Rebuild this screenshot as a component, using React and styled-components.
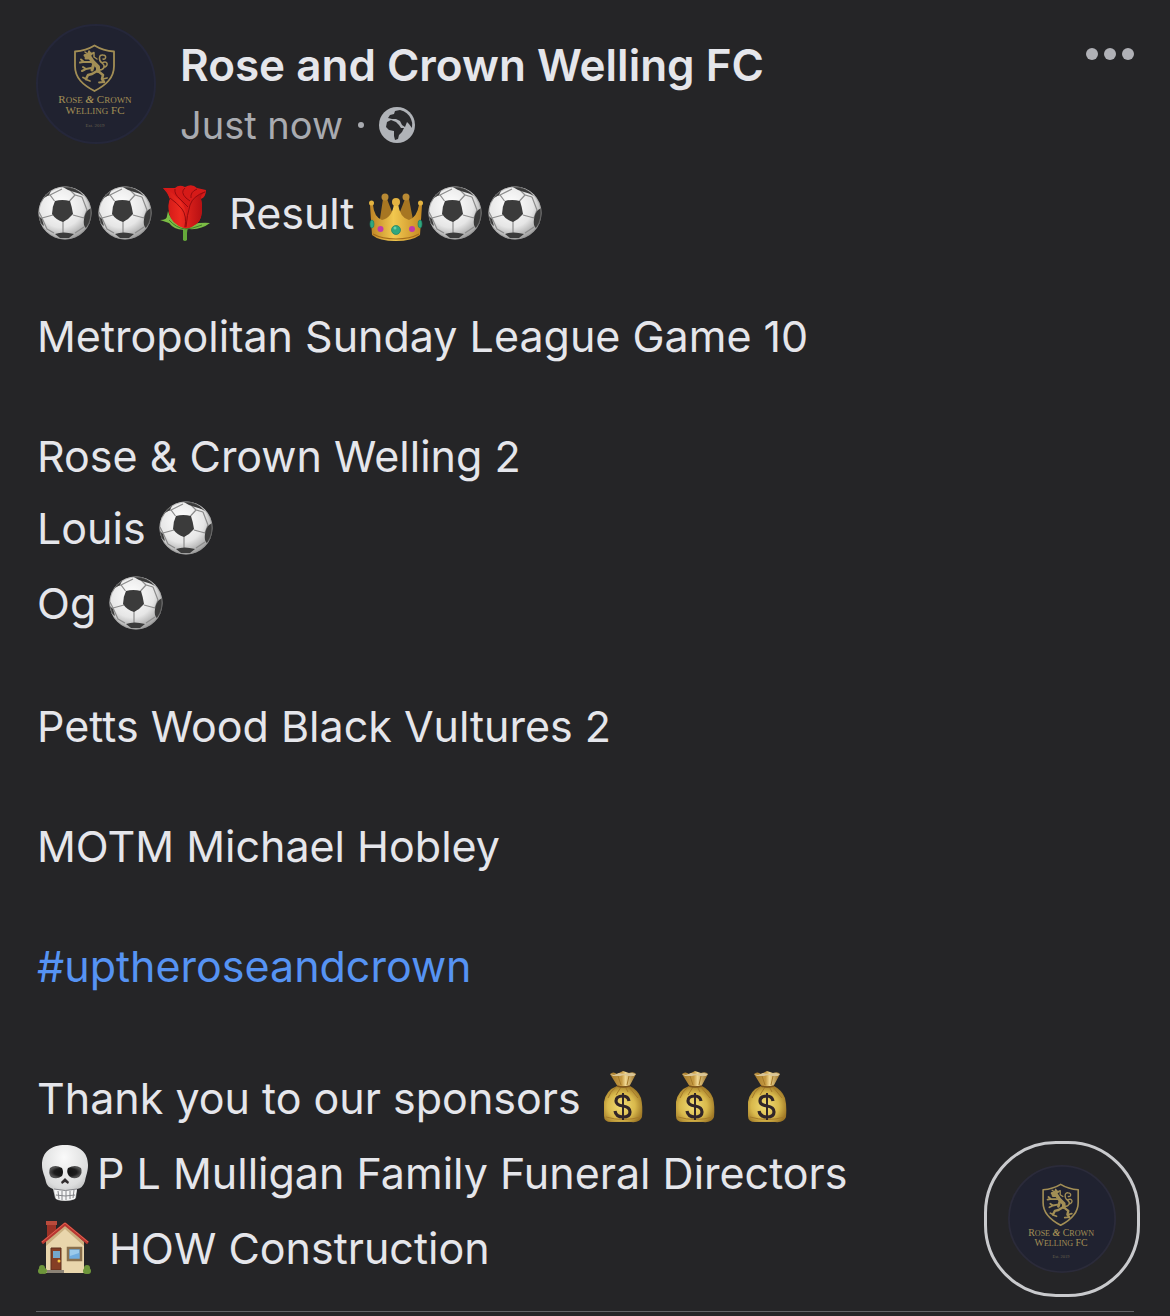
import React from "react";
import styled, { createGlobalStyle } from "styled-components";

const GlobalStyle = createGlobalStyle`
  * { box-sizing: border-box; }
  body {
    margin: 0;
    background: #252527;
    color: #e5e6eb;
    font-family: Inter, "Liberation Sans", sans-serif;
  }
`;

const Post = styled.article`
  position: relative;
  min-height: 100vh;
  padding: 24px 36px 4px;
`;

const Header = styled.header`
  display: flex;
  gap: 24px;
  height: 120px;
`;

const Avatar = styled.a`
  display: block;
  flex: none;
  width: 120px;
  height: 120px;
`;

const Heading = styled.div`
  flex: 1;
  padding-top: 11px;
`;

const PageName = styled.h1`
  margin: 0;
  font-size: 44px;
  font-weight: 600;
  line-height: 60px;
`;

const Meta = styled.div`
  display: flex;
  align-items: center;
  gap: 15px;
  height: 60px;
  color: #a9abb0;
  font-size: 38px;
  line-height: 60px;
`;

const Dot = styled.span`
  width: 6px;
  height: 6px;
  border-radius: 50%;
  background: currentColor;
`;

const MenuButton = styled.button`
  display: flex;
  align-items: center;
  gap: 6px;
  align-self: flex-start;
  height: 24px;
  margin-top: 18px;
  padding: 0;
  border: 0;
  background: none;
  color: #b0b1b6;
  cursor: pointer;

  span {
    width: 12px;
    height: 12px;
    border-radius: 50%;
    background: currentColor;
  }
`;

const Message = styled.div`
  padding: 27px 0 30px;
  border-bottom: 1px solid #626366;
  font-size: 43px;
`;

const Line = styled.p`
  display: flex;
  align-items: center;
  height: ${(p) => (p.$emoji ? 75 : 60)}px;
  margin: 0;
  padding: ${(p) => (p.$emoji ? 8 : 0)}px 0 0 1px;
  line-height: 60px;
  white-space: pre;
`;

const Blank = styled.div`
  height: 60px;
`;

const Hashtag = styled.a`
  color: #5693f3;
  text-decoration: none;
`;

const EmojiSvg = styled.svg`
  flex: none;
  width: 60px;
  height: 60px;
`;

const Badge = styled.button`
  position: absolute;
  right: 30px;
  bottom: 19px;
  display: grid;
  place-items: center;
  width: 156px;
  height: 156px;
  padding: 0;
  border: 3px solid #c9cacd;
  border-radius: 72px;
  background: #252527;
  cursor: pointer;
`;

const Logo = styled.svg`
  display: block;
  width: ${(p) => p.$size}px;
  height: ${(p) => p.$size}px;
  font-family: "Liberation Serif", serif;
`;

const Globe = styled.svg`
  width: 36px;
  height: 36px;
`;

function ClubLogo({ size, rim = "#25273a" }) {
  return (
    <Logo $size={size} viewBox="0 0 120 120" role="img" aria-label="Club crest">
      <circle cx="60" cy="60" r="59" fill="#202230" stroke={rim} strokeWidth="2" />
      <g fill="none" stroke="#a28e55" strokeLinecap="round" strokeLinejoin="round">
        <path strokeWidth="1.8" d="M58.500 21.500C52 25.500 46 27 39 27.500V42C39 54 47 61 58.500 67C70 61 78 54 78 42V27.500C71 27 65 25.500 58.500 21.500Z" />
        <path strokeWidth="4" d="M53 32L57 38L62 43L62 47" />
        <path strokeWidth="3" d="M49 31.500L55 30M50 34L53 34M58 39L56 46" />
        <path strokeWidth="2" d="M55 38L48 38L45 35.500M44 38.500L47 38M55 44L50 45L47 43M46 47L49 45.500" />
        <path strokeWidth="2.600" d="M61 47L56 50L52 51L50 55M62 47L67 51L66 55L68 58" />
        <path strokeWidth="1.800" d="M50 55L47 53.500M50 55.500L54 57M68 58L63 58.500M67 55L71 54" />
        <path strokeWidth="1.500" d="M63 46C68 46 70 42 66 39C62 36 63 30 67 31C71 31 70 36 67 35M66 39C71 36 73 41 69 43" />
        <path strokeWidth="1.500" d="M49 28L52 30L53 27L55 30L58 28.500L58 33L61 35" />
      </g>
      <g fill="#a28e55" textAnchor="middle">
        <text x="59" y="79" fontSize="11">
          R<tspan fontSize="9">OSE</tspan> <tspan fontStyle="italic" fontWeight="700">&amp;</tspan> C<tspan fontSize="9">ROWN</tspan>
        </text>
        <text x="59" y="90" fontSize="11">
          W<tspan fontSize="9">ELLING</tspan> FC
        </text>
        <text x="59" y="103" fontSize="5" fill="#66604f">Est. 2019</text>
      </g>
    </Logo>
  );
}

function Ball() {
  return (
    <EmojiSvg viewBox="0 0 60 60" role="img" aria-label="Football">
      <defs>
        <radialGradient id="ball" cx="42%" cy="35%" r="65%">
          <stop offset="0" stopColor="#ffffff" />
          <stop offset=".65" stopColor="#e6e6e6" />
          <stop offset="1" stopColor="#a2a2a2" />
        </radialGradient>
        <clipPath id="ballEdge"><circle cx="28" cy="30" r="26.500" /></clipPath>
      </defs>
      <circle cx="28" cy="30" r="26.500" fill="url(#ball)" />
      <g clipPath="url(#ballEdge)">
        <path fill="none" stroke="#8c8c8c" strokeWidth="1.200" d="M17.500 18L13 12L8 13M32.500 18L38 12L45 14M13 12L25 6M38 12L33 7M36 32L47 35M26 38V51M16 32L5 35M5 35L2 29M5 35L10 46L17 50M47 35L50 27L45 14M38 50L47 44" />
        <g fill="#3b3b3b">
          <path d="M18 18Q25 16 33 18Q35 24 36 31Q32 36 26 39Q19 37 15 31Q15 24 18 18Z" />
          <path d="M24 3Q38 2 47 13Q42 10 37 9L31 7ZM9 9L15 6L12 12L7 15L3 21Z" />
          <path d="M56 24V36L49 45Q46 43 47 36Q48 30 51 27ZM18 51Q26 48 37 51L32 55H23ZM1 32L5 36L7 43L3 40Z" />
        </g>
      </g>
      <circle cx="28" cy="30" r="26" fill="none" stroke="#8f8f8f" strokeOpacity=".5" />
    </EmojiSvg>
  );
}

function Rose() {
  return (
    <EmojiSvg viewBox="0 0 60 60" role="img" aria-label="Rose">
      <defs>
        <linearGradient id="petal" x1="0" x2="1">
          <stop offset="0" stopColor="#c91515" />
          <stop offset=".4" stopColor="#ed2a20" />
          <stop offset="1" stopColor="#ad0b10" />
        </linearGradient>
      </defs>
      <path fill="#65a83a" d="M26 43H31L30 50V57Q28 59 26 57V50Z" />
      <path fill="#7bbd45" d="M11 28Q12 37 28 45Q36 39 53 40Q44 47 32 46Q19 49 12 40L3 37Q10 37 10 33Z" />
      <path fill="#d61a18" d="M6 5L18 5Q22 1 28 4Q35 0 40 5L49 7Q49 14 44 16Q46 25 44 34Q42 42 29 46Q16 41 13 32Q10 22 13 16Q11 10 6 5Z" />
      <path fill="url(#petal)" d="M6 5Q13 7 19 14Q29 21 29 32Q28 42 27 45Q14 41 12 30Q11 21 13 16Q11 9 6 5ZM49 8Q43 12 44 16Q46 24 44 34Q42 42 29 46Q31 31 33 20Q37 12 49 8Z" />
      <path fill="none" stroke="#960a0e" strokeWidth="1" d="M13 15Q20 20 25 26Q30 33 28 44M18 6Q17 11 23 16Q27 20 31 24M28 5Q23 9 29 15L33 18M40 6Q33 9 34 15M48 9Q36 13 33 22Q30 32 29 44" />
      <path fill="none" stroke="#447c28" d="M12 37Q19 45 28 46Q35 46 45 42" />
    </EmojiSvg>
  );
}

function Crown() {
  return (
    <EmojiSvg viewBox="0 0 60 60" role="img" aria-label="Crown">
      <defs>
        <linearGradient id="gold" x1="0" x2="1">
          <stop offset="0" stopColor="#bd8325" />
          <stop offset=".45" stopColor="#f2c84f" />
          <stop offset="1" stopColor="#c58a24" />
        </linearGradient>
      </defs>
      <g transform="translate(1 -1)">
        <path fill="#a77622" d="M15 17H19L28 40L37 17H41L46 43H11Z" />
        <g fill="#b98a34"><circle cx="17" cy="15" r="3.500" /><circle cx="38" cy="15" r="3.500" /></g>
        <path fill="url(#gold)" d="M2 23H5Q6 35 14 38Q24 36 26 22H30Q32 36 41 38Q49 35 51 23H54L52 53Q44 59 28 59Q11 59 4 53Z" />
        <g fill="#e3b341"><circle cx="3.500" cy="21" r="2.500" /><circle cx="28" cy="20" r="4" /><circle cx="52.500" cy="21" r="2.500" /></g>
        <path fill="none" stroke="#a56d1b" strokeWidth="1.200" d="M5 52Q14 57 28 57Q42 57 51 52" />
        <g fill="#c23ba6"><circle cx="12.500" cy="47" r="3" /><circle cx="44" cy="47" r="3" /></g>
        <g fill="#30a77e" stroke="#208063" strokeWidth=".7"><circle cx="28" cy="48" r="4.500" /><ellipse cx="4" cy="42" rx="2" ry="4" /><ellipse cx="52" cy="42" rx="2" ry="4" /></g>
        <circle cx="27" cy="46" r="1.500" fill="#68d1ab" />
      </g>
    </EmojiSvg>
  );
}

function MoneyBag() {
  return (
    <EmojiSvg viewBox="0 0 60 60" role="img" aria-label="Money bag">
      <defs>
        <radialGradient id="bag" cx="45%" cy="55%" r="60%">
          <stop offset="0" stopColor="#f1dc75" />
          <stop offset=".6" stopColor="#d9b94c" />
          <stop offset="1" stopColor="#9b7424" />
        </radialGradient>
        <linearGradient id="neck" x1="0" x2="1">
          <stop offset="0" stopColor="#a57b2c" />
          <stop offset=".45" stopColor="#c69a42" />
          <stop offset=".6" stopColor="#f0d791" />
          <stop offset="1" stopColor="#956c25" />
        </linearGradient>
      </defs>
      <path fill="url(#neck)" d="M17 6Q20 3 24 6L30 3L36 5Q41 3 43 6L36 19H25Z" />
      <path fill="#d9c596" d="M17 6L21 7L26 5L31 6L39 5L43 6L41 8L35 8L31 7L27 8L20 8Z" />
      <path fill="url(#bag)" d="M24 18H37Q45 22 48 30Q50 38 49 49Q47 55 38 54H18Q11 54 11 48V34Q13 22 24 18Z" />
      <path fill="none" stroke="#a67b2a" strokeWidth="1" d="M23 19Q17 24 15 30M28 19L23 27M32 18L35 24M36 19L45 30M13 49Q30 54 48 49M25 8L28 17M36 8L34 17" />
      <path fill="none" stroke="#7c541c" strokeWidth="1.500" d="M24 18Q30 20 37 18" />
      <path fill="none" stroke="#302529" strokeWidth="3.200" d="M36 33Q35 28 30 28Q23 28 23 33Q23 37 30 38Q37 39 37 44Q37 49 30 49Q23 49 22 43" />
      <path stroke="#302529" strokeWidth="2" d="M30 25V52" />
    </EmojiSvg>
  );
}

function Skull() {
  return (
    <EmojiSvg viewBox="0 0 60 60" role="img" aria-label="Skull">
      <defs>
        <radialGradient id="bone" cx="48%" cy="22%" r="76%">
          <stop offset="0" stopColor="#fafafa" />
          <stop offset=".7" stopColor="#dcdddd" />
          <stop offset="1" stopColor="#adaeaf" />
        </radialGradient>
        <radialGradient id="socket">
          <stop offset="0" stopColor="#101010" />
          <stop offset=".7" stopColor="#1d1d1d" />
          <stop offset="1" stopColor="#505050" />
        </radialGradient>
      </defs>
      <path fill="url(#bone)" d="M28 2C42 2 51 9 51 22C51 29 49 32 48 38Q46 45 40 46L39 55Q36 58 28 58Q20 58 18 55L16 46Q10 44 9 39C8 33 5 29 5 22C5 9 14 2 28 2Z" />
      <path fill="url(#socket)" d="M13 25Q18 21 25 25Q27 29 25 33Q20 37 14 34Q11 30 13 25ZM31 25Q38 21 44 25Q46 30 42 34Q36 37 32 33Q29 29 31 25Z" />
      <path fill="#302c2d" d="M28 35L32 39L31 41L28 39L25 41L24 39Z" />
      <path fill="#f5f5f5" d="M17 46Q28 49 40 46L38 56Q28 59 19 56Z" />
      <path fill="none" stroke="#85868a" strokeWidth="1" d="M17 46Q28 49 40 46M21 48L22 56M25 48V57M29 48V57M33 48V56M37 47L36 55M19 52Q28 54 38 52" />
    </EmojiSvg>
  );
}

function House() {
  return (
    <EmojiSvg viewBox="0 0 60 60" role="img" aria-label="House">
      <path fill="#9b3226" d="M10 4H19V21H10Z" /><path fill="#b94b3c" d="M9 3H20V7H9Z" />
      <path fill="#e9d6ac" d="M9 21L28 7L47 24V55H9Z" />
      <path fill="#c9ae7e" d="M9 21L28 6L47 24V28L28 11L9 28Z" />
      <path fill="none" stroke="#b83630" strokeWidth="3" strokeLinejoin="round" d="M5 25L28 6L51 25" />
      <path fill="none" stroke="#de6250" strokeWidth="1" d="M5 24L28 5L51 24" />
      <path fill="#853f25" stroke="#5d301f" d="M14 30H24V52H14Z" /><path fill="#74a8ce" d="M16 33H23V40H16Z" />
      <circle cx="22" cy="43" r="1.500" fill="#f6c844" />
      <path fill="#70ade0" stroke="#8a704d" strokeWidth="2.500" d="M31 30H44V42H31Z" />
      <path fill="#9bcaec" d="M33 32H42V35L33 38Z" />
      <path fill="#8c8376" d="M10 52H27V55H10Z" />
      <g fill="#6e963b"><circle cx="5" cy="50" r="3" /><circle cx="4" cy="53" r="3" /><circle cx="7" cy="53" r="3" /><circle cx="50" cy="50" r="3" /><circle cx="49" cy="53" r="3" /><circle cx="51" cy="53" r="3" /></g>
    </EmojiSvg>
  );
}

function PublicGlobe() {
  return (
    <Globe viewBox="0 0 36 36" role="img" aria-label="Public">
      <circle cx="18" cy="18" r="18" fill="#b0b3b8" />
      <path fill="#29292c" d="M9 11L11 8L15 7L16 4L21 3Q29 5 32 12Q34 16 33 21L30 17L28 15L26 20L23 18L21 14L17 12L13 12Z" />
      <path fill="#29292c" d="M8 15L12 13L17 15L20 18L22 21L25 21L23 25L20 28L19 32L16 33L15 29V24L10 23L7 20Z" />
    </Globe>
  );
}

export default function App() {
  return (
    <>
      <GlobalStyle />
      <Post>
        <Header>
          <Avatar href="#page" aria-label="Rose and Crown Welling FC"><ClubLogo size={120} /></Avatar>
          <Heading>
            <PageName>Rose and Crown Welling FC</PageName>
            <Meta>
              <span>Just now</span>
              <Dot />
              <PublicGlobe />
            </Meta>
          </Heading>
          <MenuButton type="button" aria-label="More options"><span /><span /><span /></MenuButton>
        </Header>
        <Message>
          <Line $emoji><Ball /><Ball /><Rose /><span> Result </span><Crown /><Ball /><Ball /></Line>
          <Blank />
          <Line>Metropolitan Sunday League Game 10</Line>
          <Blank />
          <Line>Rose &amp; Crown Welling 2</Line>
          <Line $emoji><span>Louis </span><Ball /></Line>
          <Line $emoji><span>Og </span><Ball /></Line>
          <Blank />
          <Line>Petts Wood Black Vultures 2</Line>
          <Blank />
          <Line>MOTM Michael Hobley</Line>
          <Blank />
          <Line><Hashtag href="#uptheroseandcrown">#uptheroseandcrown</Hashtag></Line>
          <Blank />
          <Line $emoji>
            <span>Thank you to our sponsors </span><MoneyBag /><span> </span><MoneyBag /><span> </span><MoneyBag />
          </Line>
          <Line $emoji><Skull /><span>P L Mulligan Family Funeral Directors</span></Line>
          <Line $emoji><House /><span> HOW Construction</span></Line>
        </Message>
        <Badge type="button" aria-label="Commenting as Rose and Crown Welling FC"><ClubLogo size={108} rim="#2b2b3a" /></Badge>
      </Post>
    </>
  );
}
